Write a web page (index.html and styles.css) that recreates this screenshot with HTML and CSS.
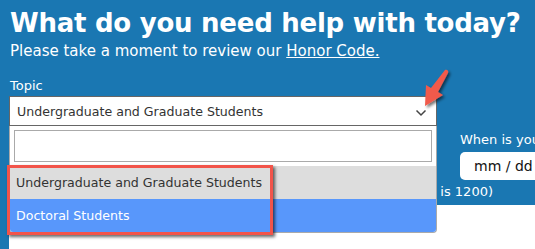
FILE: index.html
```html
<!DOCTYPE html>
<html>
<head>
<meta charset="utf-8">
<link rel="stylesheet" href="styles.css">
</head>
<body>
<div class="panel">
  <h1 class="title">What do you need help with today?</h1>
  <p class="lead">Please take a moment to review our <a class="link" href="#">Honor Code.</a></p>
  <div class="fields">
    <div class="col-topic">
      <div class="label">Topic</div>
      <div class="select-wrap">
        <div class="select">
          <span class="select-text">Undergraduate and Graduate Students</span>
          <svg class="chev" width="12" height="8" viewBox="0 0 12 8"><path d="M1.5 1.5 L6 6 L10.5 1.5" fill="none" stroke="#444" stroke-width="1.5"/></svg>
        </div>
        <div class="dropdown">
          <div class="search"></div>
          <div class="option option-selected">Undergraduate and Graduate Students</div>
          <div class="option option-hover">Doctoral Students</div>
        </div>
        <div class="mark-box"></div>
      </div>
    </div>
    <div class="col-date">
      <div class="label">When is your appointment?</div>
      <div class="date-input">mm / dd / yyyy</div>
    </div>
  </div>
  <div class="help">(Noon in 24-hour format is 1200)</div>
</div>
<div class="below"></div>
<svg class="arrow" width="50" height="50" viewBox="0 0 50 50">
  <defs>
    <filter id="sh" x="-30%" y="-30%" width="160%" height="160%">
      <feDropShadow dx="2" dy="2" stdDeviation="1.5" flood-color="#000" flood-opacity="0.55"/>
    </filter>
  </defs>
  <path d="M35 4 C37 3 39 5 38 7 L28 26 L33 29 L15 40 L16 19 L21 22 Z" fill="#f15a4b" filter="url(#sh)"/>
</svg>
</body>
</html>
```
FILE: styles.css
```css
html, body {
  margin: 0;
  padding: 0;
}
body {
  background: #1a77b2;
  width: 535px;
  height: 249px;
  overflow: hidden;
  position: relative;
  font-family: "DejaVu Sans", sans-serif;
}
.panel {
  background: #1a77b2;
  padding: 7px 0 0 0;
  height: 198px;
  color: #ffffff;
}
.title {
  margin: 0 0 0 10px;
  font-family: "DejaVu Sans", sans-serif;
  font-weight: bold;
  font-size: 26px;
  line-height: 32px;
  letter-spacing: -0.25px;
  white-space: nowrap;
}
.lead {
  margin: 3px 0 0 10px;
  font-family: "DejaVu Sans", sans-serif;
  font-size: 15px;
  line-height: 18px;
  white-space: nowrap;
}
.link {
  color: #ffffff;
  text-decoration: underline;
}
.fields {
  display: flex;
  margin-top: 18px;
}
.col-topic {
  width: 460px;
  flex: none;
}
.label {
  font-family: "DejaVu Sans", sans-serif;
  font-size: 13px;
  line-height: 16px;
  margin-left: 10px;
  white-space: nowrap;
}
.select-wrap {
  position: relative;
  margin: 2px 0 0 9px;
  width: 428px;
}
.select {
  box-sizing: border-box;
  height: 30px;
  background: #ffffff;
  border: 1px solid #666666;
  display: flex;
  align-items: center;
  justify-content: space-between;
  padding: 0 9px 0 7px;
}
.select-text {
  color: #333333;
  font-size: 12.6px;
  white-space: nowrap;
}
.chev {
  margin-top: 4px;
}
.dropdown {
  position: absolute;
  left: 0;
  top: 30px;
  width: 428px;
  box-sizing: border-box;
  background: #ffffff;
  border: 1px solid #aaaaaa;
  border-top: none;
  border-radius: 0 0 4px 4px;
  padding: 4px 4px 0 4px;
  z-index: 2;
}
.search {
  height: 32px;
  box-sizing: border-box;
  border: 1px solid #aaaaaa;
  margin-bottom: 4px;
}
.option {
  margin: 0 -4px;
  height: 33px;
  line-height: 33px;
  padding-left: 6px;
  font-size: 12.6px;
  white-space: nowrap;
}
.option-selected {
  background: #dddddd;
  color: #333333;
}
.option-hover {
  background: #5897fb;
  color: #ffffff;
  border-radius: 0 0 3px 3px;
}
.mark-box {
  position: absolute;
  left: -2px;
  top: 69px;
  width: 266px;
  height: 70px;
  box-sizing: border-box;
  border: 3px solid #f2544a;
  box-shadow: 2px 2px 3px rgba(0,0,0,0.6);
  z-index: 3;
}
.col-date {
  padding-top: 54px;
}
.col-date .label {
  margin-left: 0;
}
.date-input {
  margin-top: 4px;
  width: 120px;
  height: 28px;
  box-sizing: border-box;
  background: #ffffff;
  border-radius: 5px;
  color: #111111;
  font-size: 14px;
  line-height: 28px;
  padding-left: 14px;
  white-space: nowrap;
}
.help {
  width: 493px;
  text-align: right;
  font-size: 13px;
  margin-top: 4px;
  white-space: nowrap;
}
.below {
  margin-left: 9px;
  height: 44px;
  background: #ffffff;
}
.arrow {
  position: absolute;
  left: 410px;
  top: 66px;
  z-index: 5;
}
```
